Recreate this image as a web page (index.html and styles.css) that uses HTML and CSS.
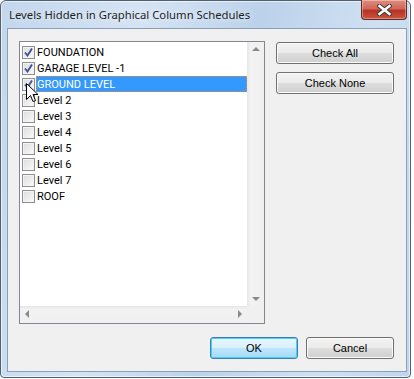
FILE: index.html
```html
<!DOCTYPE html>
<html lang="en">
<head>
    <meta charset="UTF-8">
    <title>Levels Hidden in Graphical Column Schedules</title>
    <link rel="stylesheet" href="styles.css">
</head>
<body>
    <div class="window">
        <div class="titlebar">
            <span class="title">Levels Hidden in Graphical Column Schedules</span>
            <div class="close-btn">
                <svg width="15" height="12" viewBox="0 0 15 12">
                    <path d="M2.5 2 L12.5 10 M12.5 2 L2.5 10" stroke="#3d3d3d" stroke-width="4.5" stroke-linecap="square"/>
                    <path d="M2.5 2 L12.5 10 M12.5 2 L2.5 10" stroke="#ffffff" stroke-width="2.5" stroke-linecap="square"/>
                </svg>
            </div>
        </div>

        <div class="client">
            <div class="top-row">
                <div class="listbox">
                    <ul class="items" id="items"></ul>
                    <div class="vscroll">
                        <span class="arrow up"></span>
                        <span class="arrow down"></span>
                    </div>
                    <div class="hscroll">
                        <span class="arrow left"></span>
                        <span class="arrow right"></span>
                    </div>
                    <div class="corner"></div>
                </div>
                <div class="side-buttons">
                    <button class="btn">Check All</button>
                    <button class="btn">Check None</button>
                </div>
            </div>
            <div class="bottom-row">
                <button class="btn default">OK</button>
                <button class="btn">Cancel</button>
            </div>

            <svg class="cursor" width="13" height="20" viewBox="0 0 13 20">
                <path d="M0.5 0.5 L0.5 16.5 L4.5 12.5 L7 18.5 L9.5 17.5 L7 11.5 L12 11.5 Z" fill="#fff" stroke="#000" stroke-width="1"/>
            </svg>
        </div>
    </div>

    <script>
        var levels = [
            ['FOUNDATION', true],
            ['GARAGE LEVEL -1', true],
            ['GROUND LEVEL', true],
            ['Level 2', false],
            ['Level 3', false],
            ['Level 4', false],
            ['Level 5', false],
            ['Level 6', false],
            ['Level 7', false],
            ['ROOF', false]
        ];
        var tick = '<svg width="9" height="9" viewBox="0 0 9 9"><path d="M1 4.5 L3.5 7.5 L8 0.5" fill="none" stroke="#3f5495" stroke-width="1.9"/></svg>';

        var html = '';
        levels.forEach(function(level, index) {
            var selected = index === 2 ? ' selected' : '';
            html += '<li class="item">' +
                '<span class="check">' + (level[1] ? tick : '') + '</span>' +
                '<span class="label' + selected + '">' + level[0] + '</span>' +
                '</li>';
        });
        document.getElementById('items').innerHTML = html;
    </script>
</body>
</html>
```

FILE: styles.css
```css
body {
    margin: 0;
    background-color: #ffffff;
    font-family: "Liberation Sans", Arial, sans-serif;
    font-size: 11px;
}
.window {
    position: relative;
    box-sizing: border-box;
    width: 411px;
    height: 378px;
    border: 1px solid #51606f;
    border-radius: 6px 6px 4px 4px;
    background: linear-gradient(100deg, #c2d6ed 0%, #d5e4f4 30%, #bcd2ea 55%, #cfe0f2 80%, #c0d5ec 100%);
    box-shadow: inset 0 0 0 1px rgba(255,255,255,0.6);
}
.titlebar {
    display: flex;
    align-items: flex-start;
    height: 27px;
}
.title {
    margin: 6px 0 0 8px;
    font-family: "Noto Sans", "Open Sans", sans-serif;
    font-size: 11.3px;
    color: #1e1e1e;
    text-shadow: 0 0 6px rgba(255,255,255,0.9);
}
.close-btn {
    position: absolute;
    top: -1px;
    right: 3px;
    width: 46px;
    height: 20px;
    box-sizing: border-box;
    border: 1px solid #5c2a23;
    border-top: none;
    border-radius: 0 0 4px 4px;
    background: linear-gradient(#e08d7f 0%, #d0675a 45%, #b73220 55%, #c8553f 100%);
    box-shadow: inset 0 0 0 1px rgba(255,255,255,0.35);
    display: flex;
    align-items: center;
    justify-content: center;
}
.client {
    position: relative;
    box-sizing: border-box;
    margin-left: 6px;
    width: 400px;
    height: 344px;
    border: 1px solid #8aa0b8;
    background-color: #f0f0f0;
    padding: 12px 12px 11px 11px;
}
.top-row {
    display: flex;
    gap: 11px;
}
.listbox {
    box-sizing: border-box;
    width: 247px;
    height: 283px;
    border: 1px solid #828790;
    background-color: #ffffff;
    display: grid;
    grid-template-columns: 1fr 17px;
    grid-template-rows: 1fr 17px;
}
.items {
    list-style: none;
    margin: 0;
    padding: 2px 0 0 2px;
    overflow: hidden;
    font-family: Roboto, "Liberation Sans", sans-serif;
}
.item {
    display: flex;
    align-items: center;
    height: 16px;
}
.check {
    box-sizing: border-box;
    width: 13px;
    height: 13px;
    margin-right: 1px;
    border: 1px solid #8f8f8f;
    background: linear-gradient(135deg, #dcdcdc, #fafafa);
    box-shadow: inset 0 0 0 1px #f4f4f4;
    display: flex;
    align-items: center;
    justify-content: center;
}
.label {
    flex: 1;
    height: 16px;
    line-height: 17px;
    padding-left: 1px;
    color: #000000;
    white-space: nowrap;
}
.label.selected {
    box-sizing: border-box;
    background-color: #3399ff;
    color: #ffffff;
    outline: 1px dotted #e08a3c;
    outline-offset: -1px;
}
.vscroll {
    position: relative;
    background: linear-gradient(90deg, #e6e6e6, #f2f2f2 20%, #f0f0f0);
}
.hscroll {
    position: relative;
    background: linear-gradient(#e6e6e6, #f2f2f2 20%, #f0f0f0);
}
.corner {
    background-color: #f0f0f0;
}
.arrow {
    position: absolute;
    width: 0;
    height: 0;
}
.arrow.up {
    top: 5px;
    left: 5px;
    border-left: 4px solid transparent;
    border-right: 4px solid transparent;
    border-bottom: 4px solid #8a8a8a;
}
.arrow.down {
    bottom: 5px;
    left: 5px;
    border-left: 4px solid transparent;
    border-right: 4px solid transparent;
    border-top: 4px solid #8a8a8a;
}
.arrow.left {
    left: 5px;
    top: 4px;
    border-top: 4px solid transparent;
    border-bottom: 4px solid transparent;
    border-right: 4px solid #8a8a8a;
}
.arrow.right {
    right: 5px;
    top: 4px;
    border-top: 4px solid transparent;
    border-bottom: 4px solid transparent;
    border-left: 4px solid #8a8a8a;
}
.side-buttons {
    display: flex;
    flex-direction: column;
    gap: 8px;
    padding-top: 1px;
}
.btn {
    box-sizing: border-box;
    width: 118px;
    height: 22px;
    padding: 0;
    border: 1px solid #707070;
    border-radius: 3px;
    background: linear-gradient(#f2f2f2 0%, #ebebeb 48%, #dddddd 52%, #cfcfcf 100%);
    box-shadow: inset 0 0 0 1px #fbfbfb;
    font-family: "Liberation Sans", Arial, sans-serif;
    font-size: 11px;
    color: #000000;
}
.bottom-row {
    display: flex;
    justify-content: flex-end;
    gap: 8px;
    margin-top: 13px;
}
.bottom-row .btn {
    width: 88px;
}
.btn.default {
    border-color: #3c7fb1;
    background: linear-gradient(#eaf6fd 0%, #d9f0fc 48%, #bee6fd 52%, #a7d9f5 100%);
    box-shadow: inset 0 0 0 1px #48d1ff;
}
.cursor {
    position: absolute;
    left: 18px;
    top: 54px;
}
```
